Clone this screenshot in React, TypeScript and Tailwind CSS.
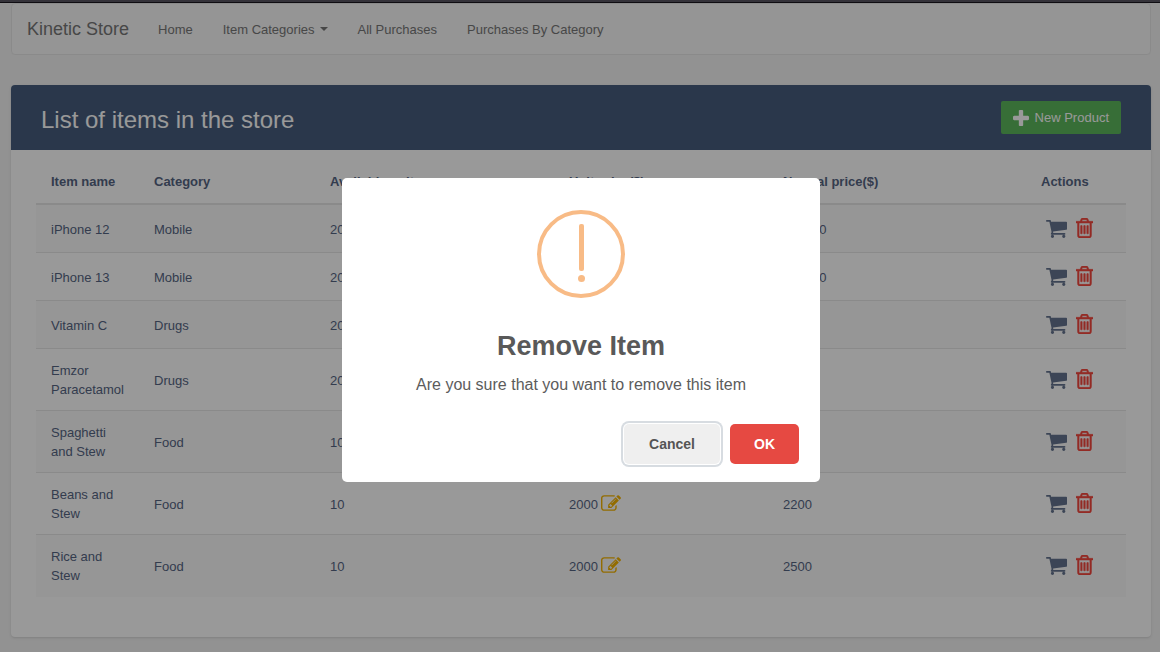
import React from "react";

type Item = {
  name: string;
  category: string;
  qty: number;
  unit: number;
  normal: number;
};

const items: Item[] = [
  { name: "iPhone 12", category: "Mobile", qty: 20, unit: 200000, normal: 250000 },
  { name: "iPhone 13", category: "Mobile", qty: 20, unit: 300000, normal: 350000 },
  { name: "Vitamin C", category: "Drugs", qty: 20, unit: 100, normal: 120 },
  { name: "Emzor Paracetamol", category: "Drugs", qty: 20, unit: 100, normal: 120 },
  { name: "Spaghetti and Stew", category: "Food", qty: 10, unit: 150, normal: 200 },
  { name: "Beans and Stew", category: "Food", qty: 10, unit: 2000, normal: 2200 },
  { name: "Rice and Stew", category: "Food", qty: 10, unit: 2000, normal: 2500 },
];

function CartIcon() {
  return (
    <svg className="h-[18px] w-[21px]" viewBox="64 256 1664 1408" preserveAspectRatio="none" fill="currentColor" aria-hidden="true">
      <path d="M704 1536q0 52-38 90t-90 38-90-38-38-90 38-90 90-38 90 38 38 90zm896 0q0 52-38 90t-90 38-90-38-38-90 38-90 90-38 90 38 38 90zm128-1088v512q0 24-16.5 42.5t-40.5 21.5l-1044 122q13 60 13 70 0 16-24 64h920q26 0 45 19t19 45-19 45-45 19h-1024q-26 0-45-19t-19-45q0-11 8-31.5t16-36 21.5-40 15.5-29.5l-177-823h-204q-26 0-45-19t-19-45 19-45 45-19h256q16 0 28.5 6.5t19.5 15.5 13 24.5 8 26 5.5 29.5 4.5 26h1201q26 0 45 19t19 45z" />
    </svg>
  );
}

function TrashIcon() {
  return (
    <svg className="h-5 w-[17px]" viewBox="192 128 1408 1536" preserveAspectRatio="none" fill="currentColor" stroke="currentColor" strokeWidth="40" aria-hidden="true">
      <path d="M704 736v576q0 14-9 23t-23 9h-64q-14 0-23-9t-9-23v-576q0-14 9-23t23-9h64q14 0 23 9t9 23zm256 0v576q0 14-9 23t-23 9h-64q-14 0-23-9t-9-23v-576q0-14 9-23t23-9h64q14 0 23 9t9 23zm256 0v576q0 14-9 23t-23 9h-64q-14 0-23-9t-9-23v-576q0-14 9-23t23-9h64q14 0 23 9t9 23zm128 724v-948h-896v948q0 22 7 40.5t14.5 27 10.5 8.5h832q3 0 10.5-8.5t14.5-27 7-40.5zm-672-1076h448l-48-117q-7-9-17-11h-317q-10 2-17 11zm928 32v64q0 14-9 23t-23 9h-96v948q0 83-47 143.5t-113 60.5h-832q-66 0-113-58.5t-47-141.5v-952h-96q-14 0-23-9t-9-23v-64q0-14 9-23t23-9h309l70-167q15-37 54-63t79-26h320q40 0 79 26t54 63l70 167h309q14 0 23 9t9 23z" />
    </svg>
  );
}

function EditIcon() {
  return (
    <svg className="h-4 w-5" viewBox="0 128 1792 1408" fill="currentColor" aria-hidden="true">
      <path d="M888 1184l116-116-152-152-116 116v56h96v96h56zm440-720q-16-16-33 1l-350 350q-17 17-1 33t33-1l350-350q17-17 1-33zm80 594v190q0 119-84.5 203.5t-203.5 84.5h-832q-119 0-203.5-84.5t-84.5-203.5v-832q0-119 84.5-203.5t203.5-84.5h832q63 0 117 25 15 7 18 23 3 17-9 29l-49 49q-14 14-32 8-23-6-45-6h-832q-66 0-113 47t-47 113v832q0 66 47 113t113 47h832q66 0 113-47t47-113v-126q0-13 9-22l64-64q15-15 35-7t20 29zm-96-738l288 288-672 672h-288v-288zm444 132l-92 92-288-288 92-92q28-28 68-28t68 28l152 152q28 28 28 68t-28 68z" />
    </svg>
  );
}

function PlusIcon() {
  return (
    <svg className="h-4 w-4" viewBox="192 128 1408 1408" fill="currentColor" aria-hidden="true">
      <path d="M1600 736v192q0 40-28 68t-68 28h-416v416q0 40-28 68t-68 28h-192q-40 0-68-28t-28-68v-416h-416q-40 0-68-28t-28-68v-192q0-40 28-68t68-28h416v-416q0-40 28-68t68-28h192q40 0 68 28t28 68v416h416q40 0 68 28t28 68z" />
    </svg>
  );
}

function Navbar() {
  return (
    <nav className="flex h-[52px] items-center rounded-[4px] border border-[#e7e7e7] bg-[#f8f8f8] pl-[15px] text-[#777777]">
      <a href="#" className="mr-3.5 text-[18px]">Kinetic Store</a>
      <a href="#" className="px-[15px]">Home</a>
      <a href="#" className="flex items-center gap-[5px] px-[15px]">
        Item Categories
        <span className="border-x-4 border-t-4 border-x-transparent border-t-current" />
      </a>
      <a href="#" className="px-[15px]">All Purchases</a>
      <a href="#" className="px-[15px]">Purchases By Category</a>
    </nav>
  );
}

function ItemsTable() {
  return (
    <table className="w-full table-fixed border-separate border-spacing-0 text-left">
      <colgroup>
        <col className="w-[103px]" />
        <col className="w-[176px]" />
        <col className="w-[239px]" />
        <col className="w-[214px]" />
        <col className="w-[258px]" />
        <col className="w-[100px]" />
      </colgroup>
      <thead>
        <tr className="h-[46px] [&>th]:border-b-2 [&>th]:border-[#e6e6e6] [&>th]:pl-[15px]">
          <th>Item name</th>
          <th>Category</th>
          <th>Available units</th>
          <th>Unit price($)</th>
          <th>Normal price($)</th>
          <th>Actions</th>
        </tr>
      </thead>
      <tbody>
        {items.map((item) => (
          <tr
            key={item.name}
            className="h-12 odd:bg-[#fafafa] [&>td]:border-b [&>td]:border-[#e6e6e6] [&>td]:pt-3 [&>td]:pb-[11px] [&>td]:pl-[15px] last:[&>td]:border-transparent"
          >
            <td className="pr-3">{item.name}</td>
            <td>{item.category}</td>
            <td>{item.qty}</td>
            <td>
              <div className="flex items-center gap-[3px]">
                {item.unit}
                <button type="button" aria-label={`Edit price of ${item.name}`} className="pb-[3px] text-[#f5b400]">
                  <EditIcon />
                </button>
              </div>
            </td>
            <td>{item.normal}</td>
            <td>
              <div className="flex items-end gap-[9px] pb-[3px] pl-[5px]">
                <button type="button" aria-label={`Buy ${item.name}`} className="text-[#65748f]">
                  <CartIcon />
                </button>
                <button type="button" aria-label={`Remove ${item.name}`} className="text-[#f5483f]">
                  <TrashIcon />
                </button>
              </div>
            </td>
          </tr>
        ))}
      </tbody>
    </table>
  );
}

function RemoveDialog() {
  return (
    <div className="fixed inset-0 flex items-center justify-center bg-black/40 pt-2 pl-0.5">
      <div role="alertdialog" aria-labelledby="dialog-title" aria-describedby="dialog-text" className="w-[478px] rounded-[5px] bg-white px-[21px] pt-8 pb-[18px] text-center">
        <svg className="mx-auto h-[88px] w-[88px]" viewBox="0 0 88 88" fill="#f8bb86" aria-hidden="true">
          <circle cx="44" cy="44" r="42" fill="none" stroke="#f8bb86" strokeWidth="4" />
          <rect x="42" y="14" width="5" height="47" rx="2" />
          <circle cx="44.5" cy="68.5" r="3.5" />
        </svg>
        <h2 id="dialog-title" className="mt-7 text-[27px] leading-10 font-bold text-[#595959]">Remove Item</h2>
        <p id="dialog-text" className="mt-[9px] text-[16px] leading-5 text-[#5c5c5c]">Are you sure that you want to remove this item</p>
        <div className="mt-[29px] flex justify-end gap-2.5 text-[14px] leading-5 font-bold">
          <button type="button" className="min-w-24 rounded-[5px] bg-[#efefef] px-6 py-2.5 text-[#555555] ring-2 ring-[#d7dce1] ring-offset-1">Cancel</button>
          <button type="button" className="rounded-[5px] bg-[#e64942] px-6 py-2.5 text-white">OK</button>
        </div>
      </div>
    </div>
  );
}

export default function App() {
  return (
    <div className="min-h-screen bg-[#f3f3f3] font-['Liberation_Sans',Arial,sans-serif] text-[13px] leading-[19px] text-[#566583]">
      <div className="relative z-10 h-[3px] border-b border-[#0f0d12] bg-[#35333a]" />
      <div className="pr-[9px] pb-[15px] pl-[11px]">
        <Navbar />
        <main className="mt-[30px] overflow-hidden rounded-[4px] bg-white shadow-sm">
          <header className="flex h-[65px] items-center justify-between bg-[#465d7d] px-[30px] text-white">
            <h1 className="pt-1 text-[24px] leading-[30px]">List of items in the store</h1>
            <button type="button" className="flex items-center gap-1.5 rounded-[2px] bg-[#5cb85c] px-3 py-[7px]">
              <PlusIcon />
              New Product
            </button>
          </header>
          <div className="px-[25px] pt-[9px] pb-10">
            <ItemsTable />
          </div>
        </main>
      </div>
      <RemoveDialog />
    </div>
  );
}
